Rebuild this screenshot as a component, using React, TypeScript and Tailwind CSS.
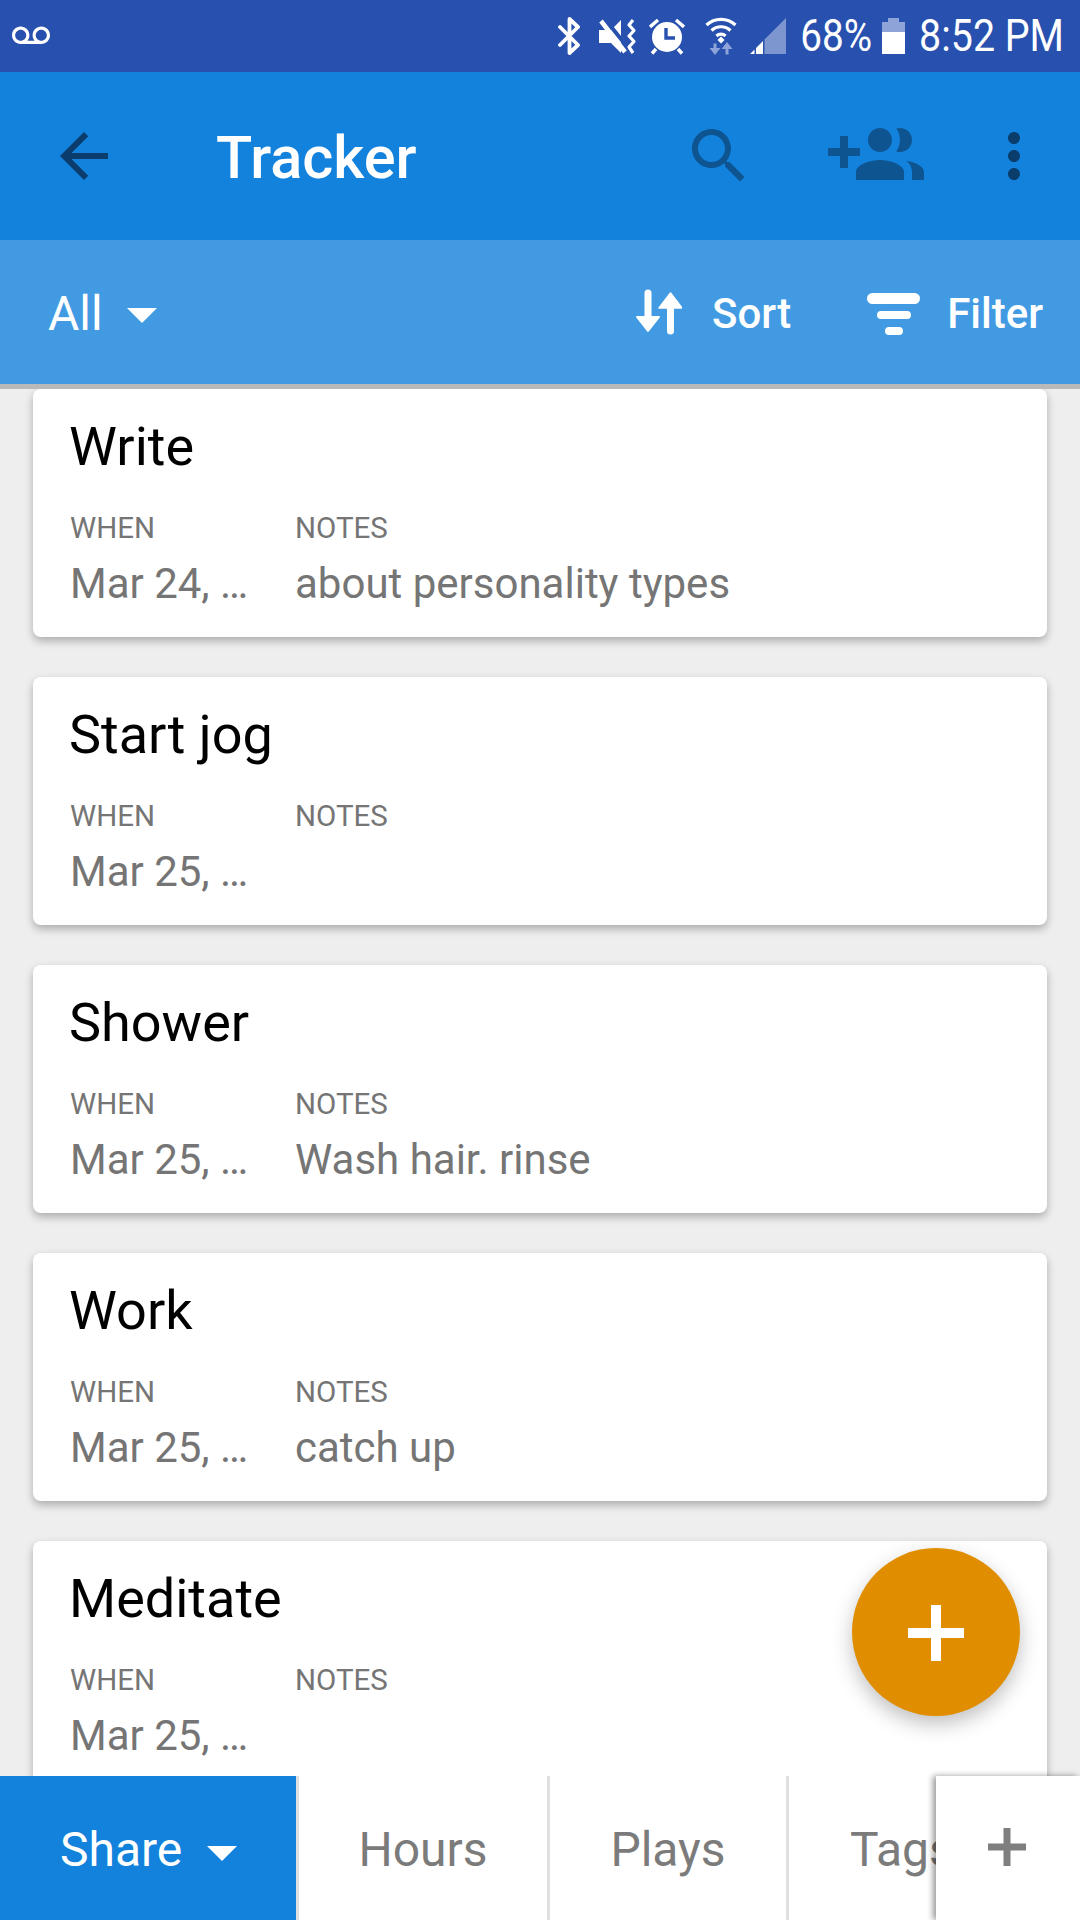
import React from "react";

const ROBOTO = "font-['Roboto',sans-serif]";

function Caret({ className = "" }: { className?: string }) {
  return (
    <svg width="30" height="15" viewBox="0 0 30 15" className={className}>
      <path d="M0 0h30L15 15z" fill="#fff" />
    </svg>
  );
}

function Icon({ d, size, color, className = "" }: { d: string; size: number; color: string; className?: string }) {
  return (
    <svg width={size} height={size} viewBox="0 0 24 24" className={`shrink-0 ${className}`}>
      <path d={d} fill={color} />
    </svg>
  );
}

const ICONS = {
  back: "M20 11H7.83l5.59-5.59L12 4l-8 8 8 8 1.41-1.41L7.83 13H20v-2z",
  search:
    "M15.5 14h-.79l-.28-.27C15.41 12.59 16 11.11 16 9.5 16 5.91 13.09 3 9.5 3S3 5.91 3 9.5 5.91 16 9.5 16c1.61 0 3.09-.59 4.23-1.57l.27.28v.79l5 4.99L20.49 19l-4.99-5zm-6 0C7.01 14 5 11.99 5 9.5S7.01 5 9.5 5 14 7.01 14 9.5 11.99 14 9.5 14z",
  group:
    "M8 10H5V7H3v3H0v2h3v3h2v-3h3v-2zm10 1c1.66 0 2.99-1.34 2.99-3S19.66 5 18 5c-.32 0-.63.05-.91.14.57.81.9 1.79.9 2.86s-.34 2.04-.9 2.86c.28.09.59.14.91.14zm-5 0c1.66 0 2.99-1.34 2.99-3S14.66 5 13 5s-3 1.34-3 3 1.34 3 3 3zm6.62 2.16c.83.73 1.38 1.66 1.38 2.84v2h3v-2c0-1.54-2.37-2.49-4.38-2.84zM13 13c-2 0-6 1-6 3v2h12v-2c0-2-4-3-6-3z",
  more:
    "M12 8c1.1 0 2-.9 2-2s-.9-2-2-2-2 .9-2 2 .9 2 2 2zm0 2c-1.1 0-2 .9-2 2s.9 2 2 2 2-.9 2-2-.9-2-2-2zm0 6c-1.1 0-2 .9-2 2s.9 2 2 2 2-.9 2-2-.9-2-2-2z",
  voicemail:
    "M18.5 6C15.46 6 13 8.46 13 11.5c0 1.33.47 2.55 1.26 3.5H9.74c.79-.95 1.26-2.17 1.26-3.5C11 8.46 8.54 6 5.5 6S0 8.46 0 11.5 2.46 17 5.5 17h13c3.04 0 5.5-2.46 5.5-5.5S21.54 6 18.5 6zm-13 9C3.57 15 2 13.43 2 11.5S3.57 8 5.5 8 9 9.57 9 11.5 7.43 15 5.5 15zm13 0c-1.93 0-3.5-1.57-3.5-3.5S16.57 8 18.5 8 22 9.57 22 11.5 20.43 15 18.5 15z",
};

function StatusBar() {
  return (
    <div className="flex h-[72px] shrink-0 items-center bg-[#2850ae] pl-[12px] pr-[16px]">
      <Icon d={ICONS.voicemail} size={38} color="#fff" />
      <div className="ml-auto flex items-center">
        <svg width="24" height="38" viewBox="0 0 24 38">
          <path d="M2 10l18 18-8.500 8V2L20 10 2 28" stroke="#fff" strokeWidth="3.800" strokeLinejoin="round" strokeLinecap="round" fill="none" />
        </svg>
        <svg width="40" height="37" viewBox="0 0 40 37" className="ml-[16px]">
          <path d="M1 12h12L23 2v33L13 25H1z" fill="#fff" />
          <path d="M6 0l25 31" stroke="#2850ae" strokeWidth="4" />
          <path d="M3 3l24 31" stroke="#fff" strokeWidth="4.500" />
          <path d="M35 2l-4 5 5 5.500-5 5.500 5 5.500-5 5.500 4 6" stroke="#fff" strokeWidth="3.200" strokeLinejoin="round" fill="none" />
        </svg>
        <svg width="36" height="37" viewBox="0 0 36 37" className="ml-[11px]">
          <path d="M1 9l8-7M35 9l-8-7M7 31l-4 4.500M29 31l4 4.500" stroke="#fff" strokeWidth="3.400" />
          <circle cx="18" cy="19" r="15" fill="#fff" />
          <path d="M17 10v10h9" stroke="#2850ae" strokeWidth="3.400" fill="none" />
        </svg>
        <svg width="32" height="38" viewBox="0 0 32 38" className="ml-[20px]">
          <path d="M1.500 8c8-7.500 21-7.500 29 0M6.500 13.500c5.500-5 13.500-5 19 0M11.500 19c2.500-2.500 6.500-2.500 9 0" stroke="#fff" strokeWidth="3.200" fill="none" />
          <path d="M16 19.500l3.500 3.500-3.500 3.500-3.500-3.500z" fill="#fff" />
          <path d="M10 26.500v6" stroke="#8ea3d8" strokeWidth="3" />
          <path d="M4.500 31h11L10 38z" fill="#8ea3d8" />
          <path d="M22 37.500v-6" stroke="#8ea3d8" strokeWidth="3" />
          <path d="M16.500 32h11L22 25z" fill="#8ea3d8" />
        </svg>
        <svg width="36" height="36" viewBox="0 0 36 36" className="ml-[13px]">
          <path d="M14.500 21.500L36 0v36H14.500z" fill="#7e96d0" />
          <path d="M0 36l4.500-4.500V36zM6 30l7-7v13H6z" fill="#fff" />
        </svg>
        <div className={`${ROBOTO} ml-[17px] w-[69px] origin-right scale-x-[0.86] text-[45px] leading-[72px] text-white`}>
          <span className="float-right">68%</span>
        </div>
        <div className="ml-[10px] flex h-[36px] w-[23px] flex-col items-center">
          <div className="h-[4px] w-[11px] bg-[#8ea3d8]" />
          <div className="h-[10px] w-full bg-[#8ea3d8]" />
          <div className="w-full flex-1 bg-white" />
        </div>
        <div className={`${ROBOTO} ml-[15px] w-[144px] origin-right scale-x-[0.875] text-[45px] leading-[72px] text-white`}>
          <span className="float-right whitespace-nowrap">8:52 PM</span>
        </div>
      </div>
    </div>
  );
}

function AppBar() {
  return (
    <div className="flex h-[168px] shrink-0 items-center bg-[#1282dc] pl-[48px] pr-[30px]">
      <Icon d={ICONS.back} size={72} color="#0a3d6b" />
      <div className={`${ROBOTO} ml-[96px] mt-[3px] text-[59.500px] font-medium leading-[72px] text-white`}>Tracker</div>
      <Icon d={ICONS.search} size={72} color="#0d5490" className="ml-auto" />
      <Icon d={ICONS.group} size={96} color="#0d5490" className="ml-[73px]" />
      <Icon d={ICONS.more} size={72} color="#0a3d6b" className="ml-[54px]" />
    </div>
  );
}

function SubBar() {
  return (
    <div className={`${ROBOTO} relative z-10 flex h-[144px] shrink-0 items-center bg-[#429be2] pl-[48px] pr-[37px] text-white shadow-[0_5px_0_#b9b9b9]`}>
      <span className="mt-[3px] text-[48px] leading-[60px]">All</span>
      <Caret className="ml-[24px] mt-[7px]" />
      <svg width="46" height="46" viewBox="0 0 46 46" className="ml-auto">
        <path d="M12 4v32" stroke="#fff" strokeWidth="7" strokeLinecap="round" />
        <path d="M1 28h22L12 42z" fill="#fff" stroke="#fff" strokeWidth="2" strokeLinejoin="round" />
        <path d="M34.500 42V10" stroke="#fff" strokeWidth="7" strokeLinecap="round" />
        <path d="M23 19h23L34.500 4z" fill="#fff" stroke="#fff" strokeWidth="1.500" strokeLinejoin="round" />
      </svg>
      <span className="ml-[30px] mt-[3px] text-[42px] font-medium leading-[60px]">Sort</span>
      <div className="ml-[76px] mt-[3px] flex w-[53px] flex-col items-center gap-[7.500px]">
        <div className="h-[11px] w-[53px] rounded-full bg-white" />
        <div className="h-[8px] w-[34px] rounded-full bg-white" />
        <div className="h-[8px] w-[18px] rounded-full bg-white" />
      </div>
      <span className="ml-[27px] mt-[3px] text-[42px] font-medium leading-[60px]">Filter</span>
    </div>
  );
}

function Card({ title, when, notes }: { title: string; when: string; notes?: string }) {
  return (
    <div className={`${ROBOTO} mb-[40px] h-[248px] shrink-0 rounded-[8px] bg-white pl-[37px] pt-[26px] shadow-[0_4px_8px_rgba(0,0,0,0.28)]`}>
      <div className="ml-[-1px] text-[54px] leading-[64px] text-black">{title}</div>
      <div className="mt-[33px] flex">
        <div className="w-[225px]">
          <div className="text-[29.500px] leading-[32px] text-[#757575]">WHEN</div>
          <div className="mt-[16px] text-[42px] leading-[48px] text-[#757575]">{when}</div>
        </div>
        <div>
          <div className="text-[29.500px] leading-[32px] text-[#757575]">NOTES</div>
          {notes ? <div className="mt-[16px] text-[42px] leading-[48px] text-[#757575]">{notes}</div> : null}
        </div>
      </div>
    </div>
  );
}

function Tab({ label, className }: { label: string; className: string }) {
  return (
    <div className={`flex h-full shrink-0 items-center justify-center border-r-[3px] border-[#e0e0e0] pt-[3px] text-[48px] text-[#7b7b7b] ${className}`}>
      {label}
    </div>
  );
}

function BottomBar() {
  return (
    <div className={`${ROBOTO} flex h-[144px] shrink-0 bg-white`}>
      <div className="flex h-full w-[296px] shrink-0 items-center bg-[#1282dc] pl-[60px] pt-[3px] text-[48px] text-white">
        <span>Share</span>
        <Caret className="ml-[25px] mt-[7px]" />
      </div>
      <div className="flex h-full min-w-0 flex-1 overflow-hidden border-l-[3px] border-[#e0e0e0]">
        <Tab label="Hours" className="w-[251px]" />
        <Tab label="Plays" className="w-[239px]" />
        <div className="flex h-full w-[240px] shrink-0 items-center pl-[61px] pt-[3px] text-[48px] text-[#7b7b7b]">Tags</div>
      </div>
      <div className="flex h-full w-[144px] shrink-0 items-center justify-center bg-white shadow-[-3px_0_6px_rgba(0,0,0,0.4)]">
        <svg width="38" height="38" viewBox="0 0 38 38" className="ml-[-2px] mt-[-2px]">
          <path d="M15.500 0h7v15.500H38v7H22.500V38h-7V22.500H0v-7h15.500z" fill="#7f7f7f" />
        </svg>
      </div>
    </div>
  );
}

export default function App() {
  return (
    <div className="relative flex h-[1920px] w-[1080px] flex-col overflow-hidden bg-[#eeeeee]">
      <StatusBar />
      <AppBar />
      <SubBar />
      <div className="flex min-h-0 flex-1 flex-col overflow-hidden px-[33px] pt-[5px]">
        <Card title="Write" when="Mar 24, …" notes="about personality types" />
        <Card title="Start jog" when="Mar 25, …" />
        <Card title="Shower" when="Mar 25, …" notes="Wash hair. rinse" />
        <Card title="Work" when="Mar 25, …" notes="catch up" />
        <Card title="Meditate" when="Mar 25, …" />
      </div>
      <BottomBar />
      <div className="absolute bottom-[204px] right-[60px] flex h-[168px] w-[168px] items-center justify-center rounded-full bg-[#e08e00] shadow-[0_8px_20px_rgba(0,0,0,0.25)]">
        <svg width="56" height="56" viewBox="0 0 56 56" className="mt-[2px]">
          <path d="M23 0h10v23h23v10H33v23H23V33H0V23h23z" fill="#fff" />
        </svg>
      </div>
    </div>
  );
}
